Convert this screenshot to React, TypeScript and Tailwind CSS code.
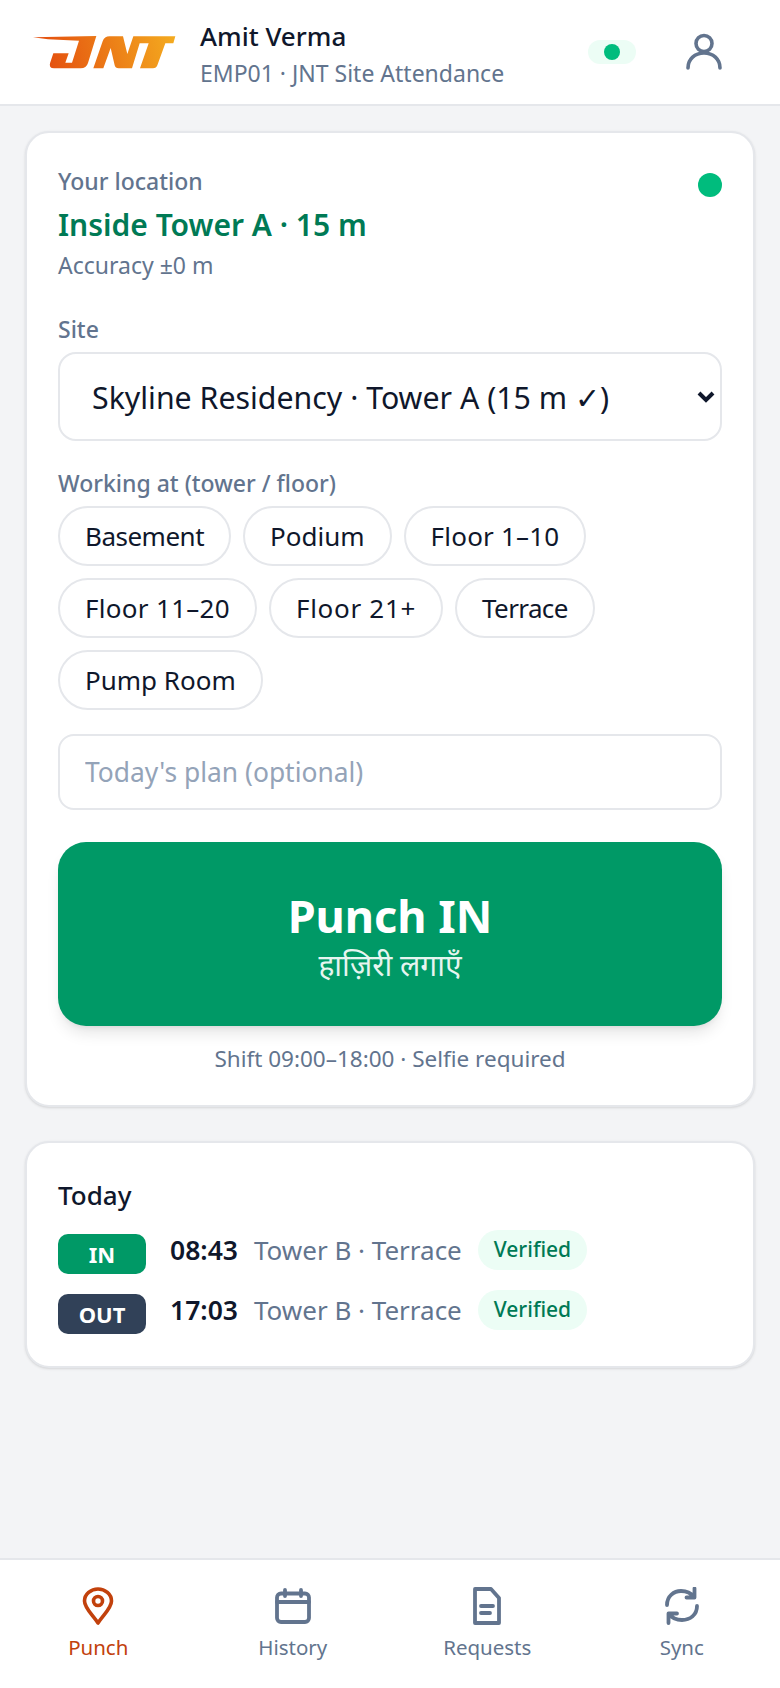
import { useState } from "react";

const chips = [
  { label: "Basement", spacing: "tracking-[-0.5px]" },
  { label: "Podium", spacing: "tracking-[0px]" },
  { label: "Floor 1–10", spacing: "tracking-[0.2px]" },
  { label: "Floor 11–20", spacing: "tracking-[0.3px]" },
  { label: "Floor 21+", spacing: "tracking-[0.7px]" },
  { label: "Terrace", spacing: "tracking-[-0.6px]" },
  { label: "Pump Room", spacing: "tracking-[0px]" },
];

function Logo() {
  return (
    <svg width="152" height="48" viewBox="0 0 456 144" className="shrink-0">
      <defs>
        <linearGradient id="jnt" gradientUnits="userSpaceOnUse" x1="60" y1="120" x2="440" y2="25">
          <stop offset="0" stopColor="#e4500f" />
          <stop offset="1" stopColor="#f4ab1f" />
        </linearGradient>
      </defs>
      <path
        fill="url(#jnt)"
        d="M15 28 L205 24 L180 105 Q175 121 158 121 L78 121 Q62 121 66 106 L76 76 L122 76 L112 104 L132 104 L153 38 L60 34 Z"
      />
      <path
        fill="url(#jnt)"
        d="M196 121 L224 40 Q229 25 245 25 L285 25 L298 78 L316 25 L442 25 L436 46 L412 46 L388 112 Q385 121 375 121 L336 121 L362 46 L335 46 L312 121 L272 121 Q262 121 260 112 L248 60 L226 121 Z"
      />
    </svg>
  );
}

function PinIcon() {
  return (
    <svg width="32" height="38" viewBox="0 0 32 38" fill="none" stroke="currentColor" strokeWidth="3.6" strokeLinejoin="round">
      <path d="M16 36 C10 27 2.5 21 2.5 14 C2.5 7 9 2 16 2 C23 2 29.5 7 29.5 14 C29.5 21 22 27 16 36 Z" />
      <circle cx="16" cy="14" r="4.5" />
    </svg>
  );
}

function CalendarIcon() {
  return (
    <svg width="38" height="36" viewBox="0 0 38 36" fill="none" stroke="currentColor" strokeWidth="3.8" strokeLinecap="round" strokeLinejoin="round">
      <rect x="3" y="5.5" width="32" height="28.5" rx="4" />
      <path d="M3 14 H35 M11 2 V8 M27 2 V8" />
    </svg>
  );
}

function FileIcon() {
  return (
    <svg width="30" height="38" viewBox="0 0 30 38" fill="none" stroke="currentColor" strokeWidth="3.8" strokeLinecap="round" strokeLinejoin="round">
      <path d="M3 2 H19 L27 11 V36 H3 Z" />
      <path d="M9 19 H21 M9 26 H18" />
    </svg>
  );
}

function SyncIcon() {
  return (
    <svg width="34" height="38" viewBox="0 0 34 38" fill="none" stroke="currentColor" strokeWidth="3.8" strokeLinecap="round" strokeLinejoin="round">
      <path d="M2 18 C2 9 9 4 16 4 C21 4 26 6 29 10 M29.5 1.5 V10.5 H21.5" />
      <path d="M32 19 C32 28 25 33 17 33 C12 33 7 31 4 27 M3.5 36 V26.5 H12" />
    </svg>
  );
}

function NavItem({ icon, label, active }: { icon: React.ReactNode; label: string; active?: boolean }) {
  return (
    <div className={`flex-1 flex flex-col items-center ${active ? "text-[#c2410c]" : "text-[#62748e]"}`}>
      <div className="h-[38px] flex items-center justify-center">{icon}</div>
      <span className="text-[20.5px] leading-[30px] mt-[7px]">{label}</span>
    </div>
  );
}

function TodayRow({ kind, time }: { kind: "IN" | "OUT"; time: string }) {
  return (
    <div className="flex items-center gap-6 h-10">
      <span
        className={`w-[88px] h-10 mt-2 rounded-[10px] flex items-center justify-center text-white text-[22px] font-bold ${
          kind === "IN" ? "bg-[#009966]" : "bg-[#314158]"
        }`}
      >
        {kind}
      </span>
      <div className="flex items-center gap-4">
        <span className="text-[26.5px] font-semibold text-[#0f172b] leading-none">{time}</span>
        <span className="text-[26px] text-[#62748e] leading-none">Tower B · Terrace</span>
        <span className="h-10 px-4 rounded-full bg-[#ecfdf5] text-[#007a55] text-[21px] font-medium flex items-center">
          Verified
        </span>
      </div>
    </div>
  );
}

export default function App() {
  const [plan, setPlan] = useState("");

  return (
    <div className="h-[1688px] flex flex-col bg-[#f3f4f6] font-['Noto_Sans',sans-serif]">
      <header className="h-[106px] shrink-0 bg-white border-b-2 border-[#e5e7eb] flex items-center pl-[28px] pr-[58px]">
        <Logo />
        <div className="ml-[20px] flex-1 pt-[2px]">
          <div className="text-[26px] leading-[36px] font-medium text-[#0f172b]">Amit Verma</div>
          <div className="text-[23px] leading-[32px] mt-[3px] text-[#62748e]">EMP01 · JNT Site Attendance</div>
        </div>
        <div className="w-12 h-6 rounded-full bg-[#ecfdf5] flex items-center justify-center mr-[50px]">
          <span className="w-4 h-4 rounded-full bg-[#00bc7d]" />
        </div>
        <svg width="36" height="38" viewBox="0 0 36 38" fill="none" stroke="#62748e" strokeWidth="3.6" strokeLinecap="round">
          <circle cx="18" cy="10.5" r="8" />
          <path d="M2 35 C2 26 9 20 18 20 C27 20 34 26 34 35" />
        </svg>
      </header>

      <main className="flex-1 px-[25px] pt-[25px] flex flex-col gap-[34px]">
        <section className="bg-white rounded-[24px] border-2 border-[#e5e7eb] shadow-sm px-[31px] pt-[32px] pb-[30px]">
          <div className="flex justify-between">
            <div>
              <div className="text-[23px] leading-[32px] font-medium text-[#62748e]">Your location</div>
              <div className="text-[30px] leading-[44px] mt-[6px] font-semibold text-[#007a55]">Inside Tower A · 15 m</div>
              <div className="text-[23px] leading-[32px] text-[#62748e] mt-[2px]">Accuracy ±0 m</div>
            </div>
            <span className="w-6 h-6 rounded-full bg-[#00bc7d] mt-[8px]" />
          </div>

          <label className="block text-[23px] leading-[32px] font-medium text-[#62748e] mt-[32px] mb-[7px]">Site</label>
          <div className="h-[89px] rounded-[18px] border-2 border-[#e5e7eb] flex items-center pl-[32px] pr-[4px] justify-between">
            <span className="text-[30.3px] text-[#0f172b] pt-[3px]">Skyline Residency · Tower A (15 m ✓)</span>
            <svg width="20" height="14" viewBox="0 0 20 14" fill="none" stroke="#0f172b" strokeWidth="4">
              <path d="M3 3 L10 10 L17 3" />
            </svg>
          </div>

          <label className="block text-[23px] leading-[32px] font-medium text-[#62748e] mt-[26px] mb-[7px]">
            Working at (tower / floor)
          </label>
          <div className="flex flex-wrap gap-x-3 gap-y-3">
            {chips.map((c) => (
              <span
                key={c.label}
                className={`h-[60px] px-[25px] rounded-full border-2 border-[#e5e7eb] flex items-center text-[26px] text-[#0f172b] ${c.spacing}`}
              >
                {c.label}
              </span>
            ))}
          </div>

          <input
            value={plan}
            onChange={(e) => setPlan(e.target.value)}
            placeholder="Today's plan (optional)"
            className="w-full h-[76px] mt-6 px-[25px] rounded-[16px] border-2 border-[#e5e7eb] text-[26.4px] text-[#0f172b] placeholder-[#94a3b8] outline-none"
          />

          <button className="w-full h-[184px] mt-8 pt-1 rounded-[28px] bg-[#009966] text-white flex flex-col items-center justify-center shadow-lg">
            <span className="text-[45px] leading-[56px] font-bold">Punch IN</span>
            <span className="text-[30px] leading-[38px] mt-[2px] opacity-90">हाज़िरी लगाएँ</span>
          </button>

          <div className="text-center text-[22.5px] leading-[32px] text-[#62748e] mt-[17px]">
            Shift 09:00–18:00 · Selfie required
          </div>
        </section>

        <section className="bg-white rounded-[24px] border-2 border-[#e5e7eb] shadow-sm px-[31px] pt-[33px] pb-[36px]">
          <div className="text-[26px] leading-[38px] font-medium text-[#0f172b] mb-[16px]">Today</div>
          <div className="flex flex-col gap-5">
            <TodayRow kind="IN" time="08:43" />
            <TodayRow kind="OUT" time="17:03" />
          </div>
        </section>
      </main>

      <nav className="h-[130px] shrink-0 bg-white border-t-2 border-[#e5e7eb] flex pt-[27px] px-[1px]">
        <NavItem icon={<PinIcon />} label="Punch" active />
        <NavItem icon={<CalendarIcon />} label="History" />
        <NavItem icon={<FileIcon />} label="Requests" />
        <NavItem icon={<SyncIcon />} label="Sync" />
      </nav>
    </div>
  );
}
